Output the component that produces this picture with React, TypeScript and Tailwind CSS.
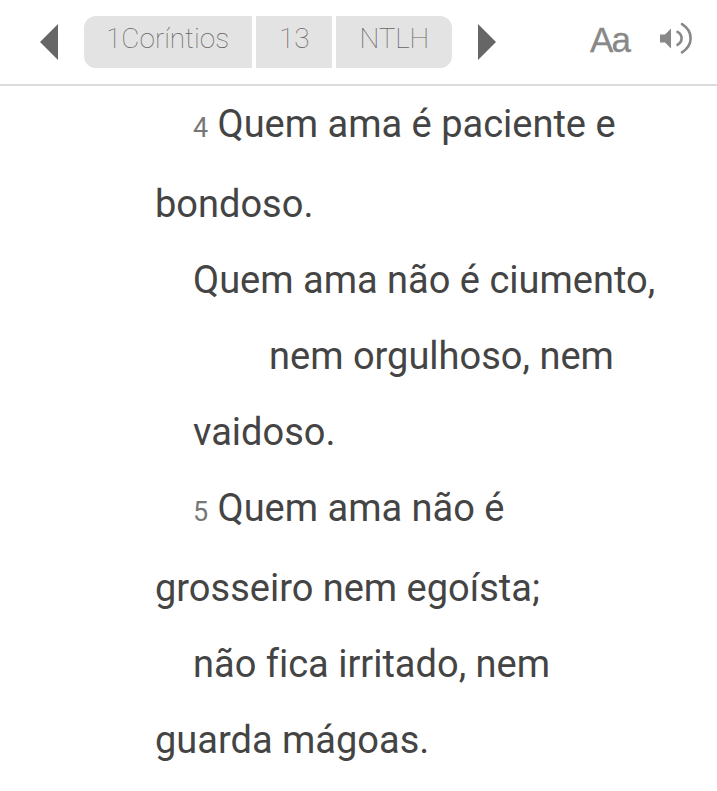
type Line = { text: string; verse?: string; indent: string };

const lines: Line[] = [
  { verse: "4", text: "Quem ama é paciente e", indent: "pl-[38px]" },
  { text: "bondoso.", indent: "pl-0" },
  { text: "Quem ama não é ciumento,", indent: "pl-[38px]" },
  { text: "nem orgulhoso, nem", indent: "pl-[114px]" },
  { text: "vaidoso.", indent: "pl-[38px]" },
  { verse: "5", text: "Quem ama não é", indent: "pl-[38px]" },
  { text: "grosseiro nem egoísta;", indent: "pl-0" },
  { text: "não fica irritado, nem", indent: "pl-[38px]" },
  { text: "guarda mágoas.", indent: "pl-0" },
];

const segment = "flex h-[52px] items-start bg-[#e3e3e3] pt-[6px] text-[28px] leading-[33px] font-thin text-[#666] whitespace-nowrap";

function Header() {
  return (
    <header className="flex h-[86px] items-start border-b-2 border-[#dcdcdc]">
      <button className="mt-6 ml-10" aria-label="Anterior">
        <svg className="block" width="18" height="36" viewBox="0 0 18 36">
          <path d="M18 0v36L0 18z" fill="#666" />
        </svg>
      </button>
      <nav className="mt-4 ml-[26px] flex gap-1">
        <button className={`${segment} w-[168px] rounded-l-xl pl-[22px]`}>1Coríntios</button>
        <button className={`${segment} w-[76px] pl-[23px]`}>13</button>
        <button className={`${segment} w-[116px] rounded-r-xl pl-[23.5px] tracking-[-0.2px]`}>NTLH</button>
      </nav>
      <button className="mt-6 ml-[26px]" aria-label="Próximo">
        <svg className="block" width="18" height="36" viewBox="0 0 18 36">
          <path d="M0 0l18 18L0 36z" fill="#666" />
        </svg>
      </button>
      <button className="mt-[19px] ml-[94px] w-[41px] text-left font-['Liberation_Sans',Arial,sans-serif] text-[35px] leading-[42px] tracking-[-1.8px] text-[#888] [-webkit-text-stroke:0.3px_#888]">
        Aa
      </button>
      <button className="mt-5 ml-[28px]" aria-label="Ouvir">
        <svg className="block" width="36" height="36" viewBox="0 0 36 36" fill="none" stroke="#888" strokeLinecap="round">
          <path d="M1 14.500h5l6-6v20l-6-6H1z" fill="#888" stroke="none" />
          <path d="M18.500 11.800c5.500 3.200 5.500 9.800 0 13" strokeWidth="2.600" />
          <path d="M23 4.200c11.500 7.200 11.500 21 0 28.200" strokeWidth="2.600" />
        </svg>
      </button>
    </header>
  );
}

export default function App() {
  return (
    <div className="h-[791px] overflow-hidden bg-white font-[Roboto,sans-serif]">
      <Header />
      <main className="pl-[155px] text-[38px] leading-[76px] text-[#444] [font-variant-ligatures:none]">
        {lines.map((line) => (
          <p key={line.text} className={`${line.indent} ${line.verse ? "h-20" : "h-[76px]"} flex items-baseline whitespace-nowrap`}>
            {line.verse && <span className="w-[24.5px] text-[27px] text-[#777]">{line.verse}</span>}
            <span>{line.text}</span>
          </p>
        ))}
      </main>
    </div>
  );
}
